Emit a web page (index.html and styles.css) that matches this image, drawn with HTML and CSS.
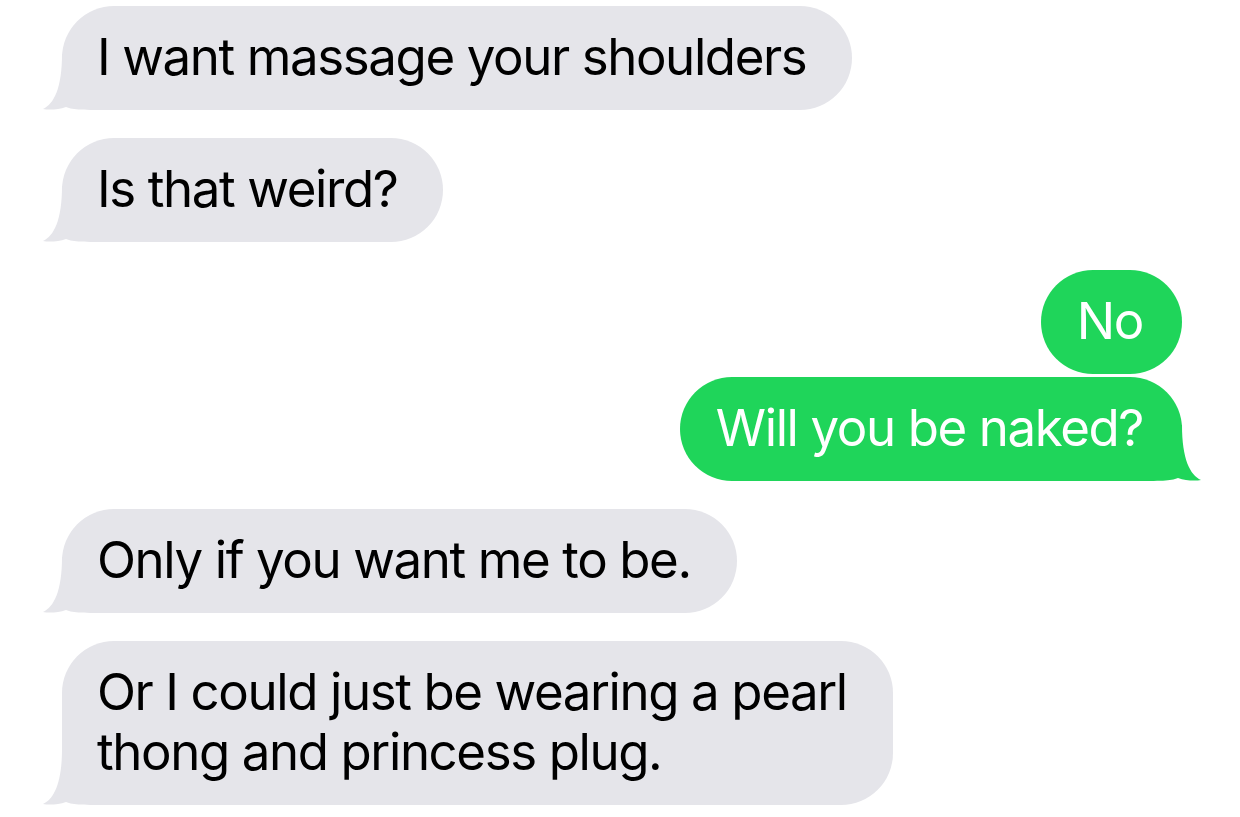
FILE: index.html
```html
<!DOCTYPE html>
<html>
<head>
<meta charset="utf-8">
<link rel="stylesheet" href="styles.css">
</head>
<body>
<div class="thread">
  <div class="bubble recv">I want massage your shoulders<svg class="tail" viewBox="-20 -56 72 56"><path d="M0,-56 C0,-22 -8,-6 -19,-1 C-14,0 -4,0 4,-3 C12,0 20,0 52,0 L52,-56 Z"/></svg></div>
  <div class="bubble recv">Is that weird?<svg class="tail" viewBox="-20 -56 72 56"><path d="M0,-56 C0,-22 -8,-6 -19,-1 C-14,0 -4,0 4,-3 C12,0 20,0 52,0 L52,-56 Z"/></svg></div>
  <div class="bubble sent first">No</div>
  <div class="bubble sent follow">Will you be naked?<svg class="tail" viewBox="-20 -56 72 56"><path d="M0,-56 C0,-22 -8,-6 -19,-1 C-14,0 -4,0 4,-3 C12,0 20,0 52,0 L52,-56 Z"/></svg></div>
  <div class="bubble recv">Only if you want me to be.<svg class="tail" viewBox="-20 -56 72 56"><path d="M0,-56 C0,-22 -8,-6 -19,-1 C-14,0 -4,0 4,-3 C12,0 20,0 52,0 L52,-56 Z"/></svg></div>
  <div class="bubble recv">Or I could just be wearing a pearl<br>thong and princess plug.<svg class="tail" viewBox="-20 -56 72 56"><path d="M0,-56 C0,-22 -8,-6 -19,-1 C-14,0 -4,0 4,-3 C12,0 20,0 52,0 L52,-56 Z"/></svg></div>
</div>
</body>
</html>
```
FILE: styles.css
```css
html, body {
  margin: 0;
  background: #ffffff;
}
body {
  width: 1240px;
  height: 817px;
  overflow: hidden;
  font-family: Inter, "Liberation Sans", sans-serif;
}
.thread {
  display: flex;
  flex-direction: column;
  padding: 6px 58px 0 62px;
}
.bubble {
  position: relative;
  isolation: isolate;
  font-size: 51px;
  line-height: 60px;
  letter-spacing: -1.4px;
  padding: 21px 46px 23px 35px;
  border-radius: 52px;
  margin-top: 28px;
  white-space: nowrap;
}
.bubble:first-child {
  margin-top: 0;
}
.recv {
  align-self: flex-start;
  background: #e5e5ea;
  color: #000;
}
.recv .tail {
  fill: #e5e5ea;
  left: -20px;
}
.sent {
  align-self: flex-end;
  background: #1fd55a;
  color: #fff;
  padding: 21px 39px 23px 36px;
}
.sent .tail {
  fill: #1fd55a;
  right: -20px;
  transform: scaleX(-1);
}
.sent.follow {
  margin-top: 3px;
}
.tail {
  position: absolute;
  z-index: -1;
  bottom: 0;
  width: 72px;
  height: 56px;
  overflow: visible;
}
```
